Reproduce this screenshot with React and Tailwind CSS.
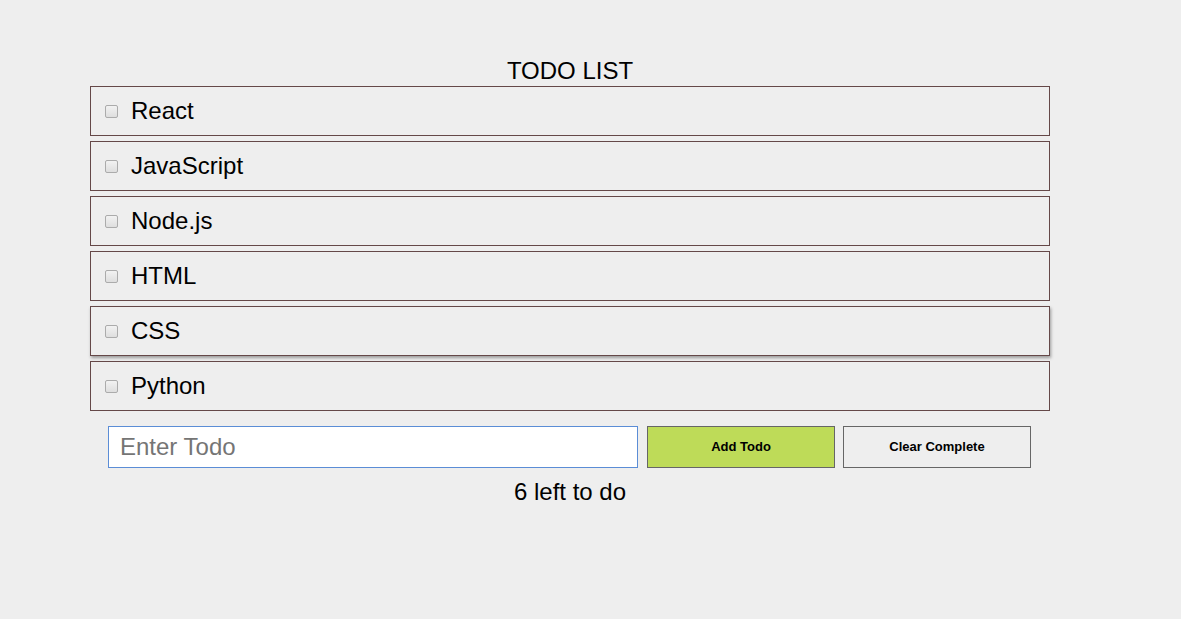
import React from "react";

const items = ["React", "JavaScript", "Node.js", "HTML", "CSS", "Python"];

export default function App() {
  return (
    <div
      className="min-h-screen w-full bg-[#eeeeee] text-black"
      style={{ fontFamily: '"Liberation Sans", Arial, sans-serif' }}
    >
      <div className="ml-[90px] w-[960px] pt-[56px]">
        <h1 className="text-center text-[24px] leading-[30px] font-normal">TODO LIST</h1>
        <div className="flex flex-col gap-[5px]">
          {items.map((t) => (
            <div
              key={t}
              className={
                "flex h-[50px] items-center border border-[#654848] bg-[#eeeeee] pl-[14px] " +
                (t === "CSS" ? "shadow-[1px_2px_3px_rgba(0,0,0,0.35)]" : "")
              }
            >
              <span className="block h-[13px] w-[13px] rounded-[2px] border border-[#ababab] bg-gradient-to-b from-[#f2f2f2] to-[#dedede]" />
              <span className="ml-[13px] text-[24px]">{t}</span>
            </div>
          ))}
        </div>
        <div className="ml-[18px] mt-[15px] flex">
          <input
            type="text"
            placeholder="Enter Todo"
            className="box-border h-[42px] w-[530px] border border-[#5b8dd6] bg-white px-[11px] text-[24px] outline-none placeholder:text-[#757575]"
            style={{ fontFamily: '"Liberation Sans", Arial, sans-serif' }}
          />
          <button className="ml-[9px] h-[42px] w-[188px] border border-[#666666] bg-[#bedb58] text-[13px] font-bold text-black">
            Add Todo
          </button>
          <button className="ml-[8px] h-[42px] w-[188px] border border-[#666666] bg-[#eeeeee] text-[13px] font-bold text-black">
            Clear Complete
          </button>
        </div>
        <div className="mt-[6px] text-center text-[24px]">6 left to do</div>
      </div>
    </div>
  );
}
